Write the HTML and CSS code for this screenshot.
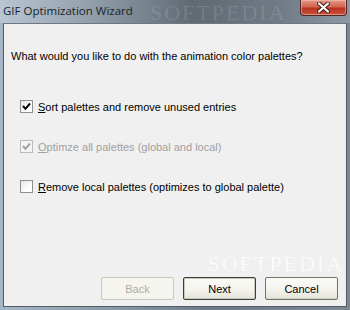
FILE: index.html
```html
<!DOCTYPE html>
<html lang="en">
<head>
  <meta charset="UTF-8" />
  <title>GIF Optimization Wizard</title>
  <link rel="stylesheet" href="styles.css">
</head>
<body>
  <div class="window">
    <div class="titlebar">
      <span class="title">GIF Optimization Wizard</span>
      <span class="watermark-top">SOFTPEDIA</span>
      <button class="close">
        <svg width="13" height="11" viewBox="0 0 13 11">
          <path d="M2 1.5 L11 9.5 M11 1.5 L2 9.5" stroke="#3a1b16" stroke-width="4" stroke-linecap="round" />
          <path d="M2 1.5 L11 9.5 M11 1.5 L2 9.5" stroke="#ffffff" stroke-width="2.2" stroke-linecap="round" />
        </svg>
      </button>
    </div>

    <div class="client">
      <p class="question">What would you like to do with the animation color palettes?</p>

      <div class="options">
        <label class="option">
          <span class="box checked">
            <svg width="9" height="9" viewBox="0 0 9 9"><path d="M1 4 L3.5 6.8 L8 1.5" fill="none" stroke="#000" stroke-width="2" /></svg>
          </span>
          <span><u>S</u>ort palettes and remove unused entries</span>
        </label>
        <label class="option disabled">
          <span class="box checked">
            <svg width="9" height="9" viewBox="0 0 9 9"><path d="M1 4 L3.5 6.8 L8 1.5" fill="none" stroke="#a0a0a0" stroke-width="2" /></svg>
          </span>
          <span><u>O</u>ptimze all palettes (global and local)</span>
        </label>
        <label class="option">
          <span class="box"></span>
          <span><u>R</u>emove local palettes (optimizes to global palette)</span>
        </label>
      </div>

      <div class="buttons">
        <span class="watermark">SOFTPEDIA</span>
        <button class="btn" disabled>Back</button>
        <button class="btn default">Next</button>
        <button class="btn">Cancel</button>
      </div>
    </div>
  </div>
</body>
</html>
```

FILE: styles.css
```css
body {
  margin: 0;
  font-family: "Liberation Sans", Arial, sans-serif;
  font-size: 11px;
  color: #000;
}

.window {
  width: 350px;
  height: 310px;
  display: flex;
  flex-direction: column;
  background: linear-gradient(90deg, #a7b6c6 0%, #8e9aa6 30%, #6f7a84 60%, #7d8893 100%);
  overflow: hidden;
}

.titlebar {
  position: relative;
  height: 23px;
  display: flex;
  align-items: flex-start;
  background: linear-gradient(90deg, #b8c6d4 0%, #94a1ad 25%, #5f6a73 55%, #707b85 80%, #8d98a2 100%);
}

.title {
  font-family: "Open Sans", "Noto Sans", sans-serif;
  font-size: 11.5px;
  color: #1b1f24;
  margin: 3px 0 0 3px;
}

.watermark-top {
  position: absolute;
  left: 150px;
  top: 0;
  font-family: "Liberation Serif", serif;
  font-size: 22px;
  letter-spacing: 2px;
  color: rgba(255, 255, 255, 0.12);
}

.close {
  margin-left: auto;
  margin-right: 3px;
  width: 47px;
  height: 16px;
  padding: 0;
  border: 1px solid #4b2a26;
  border-top: none;
  border-radius: 0 0 4px 4px;
  background: linear-gradient(#e59a88 0%, #d2644f 45%, #b8321f 55%, #c9533c 100%);
  box-shadow: inset 0 0 0 1px rgba(255, 200, 190, 0.5);
  display: flex;
  align-items: center;
  justify-content: center;
}

.client {
  flex: 1;
  margin: 0 3px 3px 3px;
  border: 1px solid #525d68;
  border-top-color: #6d7883;
  background: #f0f0f0;
  display: flex;
  flex-direction: column;
  padding: 0 8px 6px 7px;
}

.question {
  margin: 26px 0 0 0;
  line-height: 13px;
}

.options {
  display: flex;
  flex-direction: column;
  gap: 27px;
  margin: 37px 0 0 9px;
}

.option {
  display: flex;
  align-items: center;
  gap: 5px;
  height: 13px;
}

.option.disabled {
  color: #a0a0a0;
}

.box {
  width: 11px;
  height: 11px;
  border: 1px solid #8e8f8f;
  background: linear-gradient(135deg, #e4e4e4, #ffffff 70%);
  display: flex;
  align-items: center;
  justify-content: center;
}

.option.disabled .box {
  border-color: #bcbcbc;
  background: #f4f4f4;
}

.buttons {
  position: relative;
  margin-top: auto;
  display: flex;
  justify-content: flex-end;
  gap: 9px;
}

.watermark {
  position: absolute;
  right: -6px;
  top: -26px;
  font-family: "Liberation Serif", serif;
  font-size: 22px;
  letter-spacing: 2px;
  color: rgba(255, 255, 255, 0.9);
  text-shadow: 0 0 1px #e4e4e4;
}

.btn {
  width: 73px;
  height: 23px;
  padding: 0;
  font-family: "Liberation Sans", Arial, sans-serif;
  font-size: 11px;
  color: #000;
  border: 1px solid #75735f;
  border-radius: 2px;
  background: linear-gradient(#fbfbf8 0%, #f3f2ec 60%, #e3e2da 100%);
  box-shadow: inset 0 -1px 0 #d6d5cc;
}

.btn.default {
  border-color: #3f3e33;
  box-shadow: inset 0 0 0 1px #c9c8bd;
}

.btn:disabled {
  color: #aeae9f;
  border-color: #c9c7b7;
  background: #f5f4ef;
  box-shadow: none;
}
```
